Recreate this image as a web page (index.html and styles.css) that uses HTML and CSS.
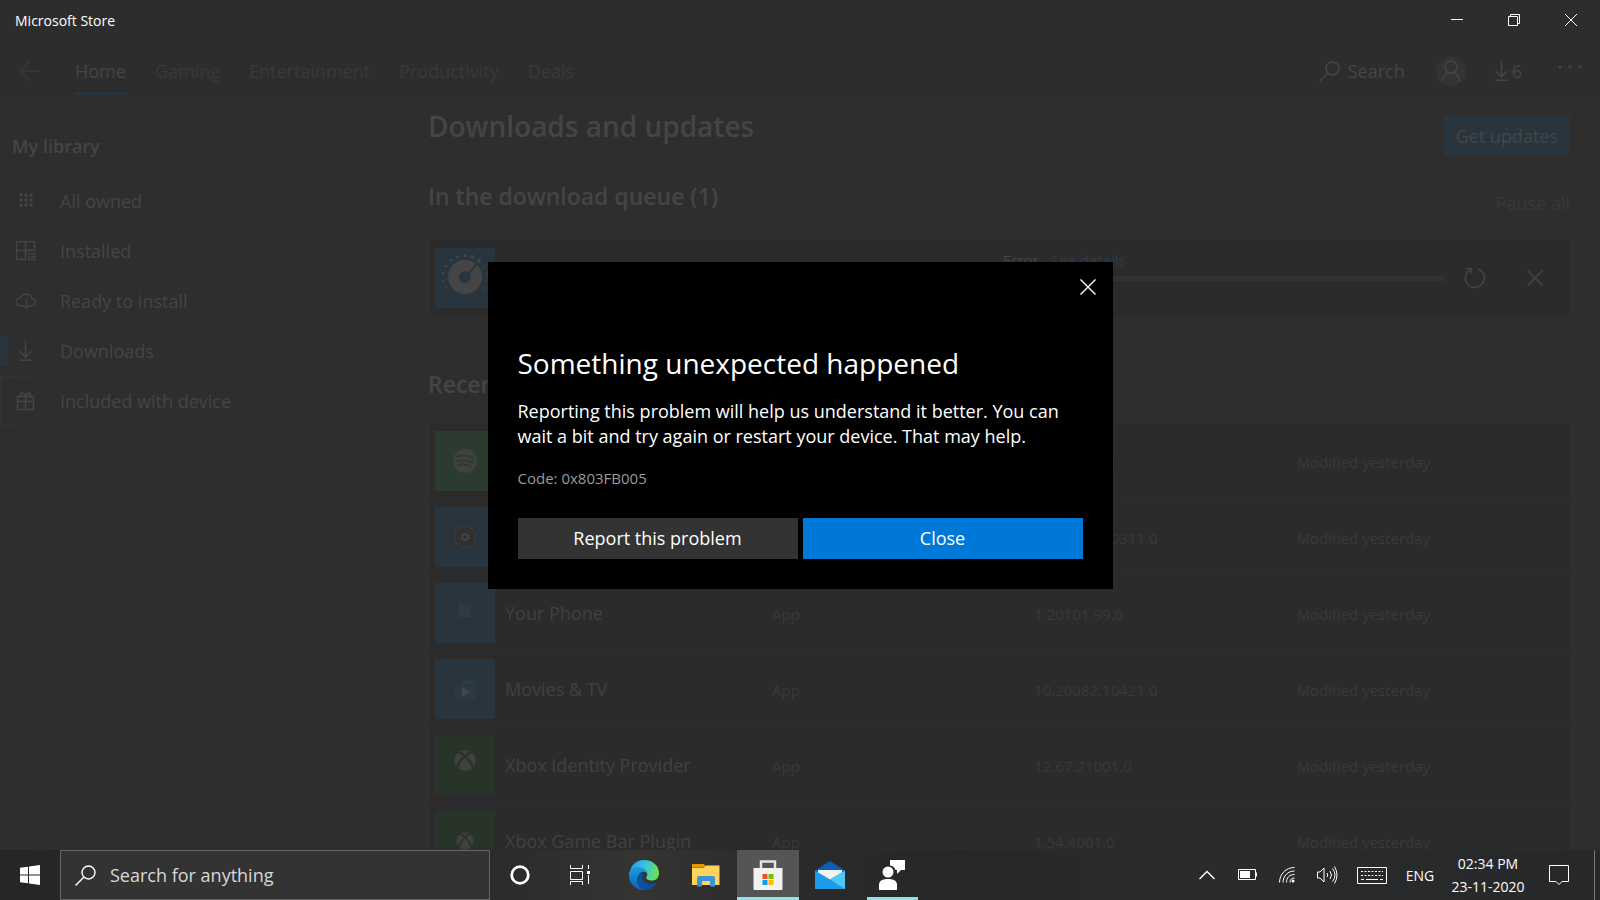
FILE: index.html
```html
<!doctype html>
<html lang="en">
  <head>
    <meta charset="UTF-8" />
    <meta name="viewport" content="width=device-width, initial-scale=1" />
    <title>Microsoft Store</title>
    <link rel="stylesheet" href="styles.css">
  </head>
  <body class="desktop">
    <div class="window">
      <header class="titlebar">
        <span class="titlebar__name">Microsoft Store</span>
        <button class="titlebar__button" aria-label="Minimize">
          <svg width="12" height="12" viewBox="0 0 12 12"><path d="M0 5.5h12" /></svg>
        </button>
        <button class="titlebar__button" aria-label="Restore">
          <svg width="12" height="12" viewBox="0 0 12 12"><path d="M.5 2.5h9v9h-9zM2.500 2.500v-2h9v9h-2" /></svg>
        </button>
        <button class="titlebar__button" aria-label="Close window">
          <svg width="12" height="12" viewBox="0 0 12 12"><path d="M0 0l12 12M12 0L0 12" /></svg>
        </button>
      </header>

      <div class="toolbar">
        <button class="toolbar__back" aria-label="Back">
          <svg width="20" height="20" viewBox="0 0 20 20"><path d="M20 10H1M10 0.500L.5 10l9.500 9.500" /></svg>
        </button>
        <nav class="tabs">
          <a class="tabs__link tabs__link--active" href="#home">Home</a>
          <a class="tabs__link" href="#gaming">Gaming</a>
          <a class="tabs__link" href="#entertainment">Entertainment</a>
          <a class="tabs__link" href="#productivity">Productivity</a>
          <a class="tabs__link" href="#deals">Deals</a>
        </nav>
        <button class="toolbar__search">
          <svg width="21" height="21" viewBox="0 0 21 21"><circle cx="13.500" cy="7.500" r="6.500" /><path d="M9 12L.5 20.500" /></svg>
          Search
        </button>
        <button class="toolbar__avatar" aria-label="Account">
          <svg width="20" height="22" viewBox="0 0 20 22"><circle cx="10" cy="7" r="6" /><path d="M1.500 21c0-5 3.500-8 8.500-8s8.500 3 8.500 8" /></svg>
        </button>
        <button class="toolbar__downloads">
          <svg width="13" height="20" viewBox="0 0 13 20"><path d="M6.500 0v15.500M.7 10l5.800 5.800L12.300 10M.5 19.300h12" /></svg>
          6
        </button>
        <button class="toolbar__more" aria-label="See more">
          <svg width="24" height="4" viewBox="0 0 24 4"><circle class="solid" cx="2" cy="2" r="1.600" /><circle class="solid" cx="12" cy="2" r="1.600" /><circle class="solid" cx="22" cy="2" r="1.600" /></svg>
        </button>
      </div>

      <div class="content">
        <aside class="sidebar">
          <h3 class="sidebar__title">My library</h3>
          <a class="sidebar__item" href="#all">
            <svg width="20" height="20" viewBox="0 0 20 20"><g class="solid"><circle cx="5" cy="4" r="1.700" /><circle cx="10" cy="4" r="1.700" /><circle cx="15" cy="4" r="1.700" /><circle cx="5" cy="9" r="1.700" /><circle cx="10" cy="9" r="1.700" /><circle cx="15" cy="9" r="1.700" /><circle cx="5" cy="14" r="1.700" /><circle cx="10" cy="14" r="1.700" /><circle cx="15" cy="14" r="1.700" /></g></svg>
            All owned
          </a>
          <a class="sidebar__item" href="#installed">
            <svg width="20" height="20" viewBox="0 0 20 20"><path d="M.5.5h18v9H.5zM9.500.5v18h-9v-9M12 13h2M15 13h5M12 16h2M15 16h5M12 18.500h2M15 18.500h5" /></svg>
            Installed
          </a>
          <a class="sidebar__item" href="#ready">
            <svg width="20" height="20" viewBox="0 0 20 20"><path d="M7 15H4.500a4 4 0 0 1-.3-8A6.300 6.300 0 0 1 16 7.500a3.800 3.800 0 0 1-.5 7.500H14M10.500 8.500v9M7.500 14.500l3 3 3-3" /></svg>
            Ready to install
          </a>
          <a class="sidebar__item sidebar__item--active" href="#downloads">
            <svg width="20" height="20" viewBox="0 0 20 20"><path d="M9.500 0v15.500M3.500 10l6 6 6-6M3.500 19.300h12" /></svg>
            Downloads
          </a>
          <a class="sidebar__item sidebar__item--focus" href="#included">
            <svg width="20" height="20" viewBox="0 0 20 20"><path d="M1.500 5.500h16v13h-16zM1.500 10.500h16M9.500 5v13.500M9.500 5.500C5 5.500 4 4.500 4.500 3S8.500 1.500 9.500 5.500c1-4 4.500-4 5-2.500s-.5 2.500-5 2.500" /></svg>
            Included with device
          </a>
        </aside>

        <main class="page">
          <div class="page__head">
            <h1>Downloads and updates</h1>
            <button class="page__update">Get updates</button>
          </div>

          <div class="page__section">
            <h2>In the download queue (1)</h2>
            <button class="page__pause">Pause all</button>
          </div>
          <div class="queue">
            <div class="tile tile--blue">
              <svg width="60" height="60" viewBox="0 0 60 60">
                <circle class="tile__ring" cx="30" cy="29" r="11.500" />
                <path class="tile__notch" d="M33 26l9-10" />
                <g class="solid"><circle cx="11" cy="40" r="1" /><circle cx="8" cy="33" r="1" /><circle cx="8" cy="25" r="1.200" /><circle cx="11" cy="18" r="1.300" /><circle cx="16" cy="12.500" r="1.400" /><circle cx="22.500" cy="9" r="1.500" /><circle cx="30" cy="7.500" r="1.700" /><circle cx="37.500" cy="9" r="1.900" /><circle cx="44" cy="13" r="2.100" /></g>
                <g class="tile__dots"><circle cx="49" cy="19" r="1.500" /><circle cx="51.500" cy="26" r="1.500" /><circle cx="51.500" cy="33" r="1.500" /><circle cx="49" cy="40" r="1.500" /></g>
              </svg>
            </div>
            <div class="queue__status">
              <p>Error <a href="#details">See details</a></p>
              <div class="queue__bar"></div>
            </div>
            <div class="queue__actions">
              <button aria-label="Retry">
                <svg width="22" height="22" viewBox="0 0 22 22"><path d="M14 2a9.500 9.500 0 1 1-7 0.300M1.500 1.500H7.500V7" /></svg>
              </button>
              <button aria-label="Cancel">
                <svg width="16" height="16" viewBox="0 0 16 16"><path d="M.5.5l15 15M15.500.5l-15 15" /></svg>
              </button>
            </div>
          </div>

          <h2 class="page__recent">Recent activity</h2>
          <table class="apps">
            <tbody>
              <tr>
                <td><div class="apps__name"><span class="tile tile--spotify">
                  <svg width="60" height="60" viewBox="0 0 60 60"><circle class="solid" cx="30" cy="30" r="12" /><path class="tile__cut" d="M22 25.500q9-2.500 17 2M22.500 30q8-2 15 1.500M23 34q7-1.500 13 1.500" /></svg>
                </span>Spotify Music</div></td>
                <td>App</td><td>1.147.684.0</td><td>Modified yesterday</td>
              </tr>
              <tr>
                <td><div class="apps__name"><span class="tile tile--blue">
                  <svg width="60" height="60" viewBox="0 0 60 60"><circle cx="30" cy="30" r="10.500" fill="#303030" stroke="#43352f" stroke-width="1.500" /><path d="M33 25l6-6" stroke="#43352f" /><circle cx="30" cy="30" r="3" fill="#2b3035" stroke="#434343" stroke-width="2.500" /></svg>
                </span>Groove Music</div></td>
                <td>App</td><td>10.20102.10311.0</td><td>Modified yesterday</td>
              </tr>
              <tr>
                <td><div class="apps__name"><span class="tile tile--blue">
                  <svg width="60" height="60" viewBox="0 0 60 60"><path d="M24 19h12v22H24z" fill="#29323a" stroke="none" /><path d="M24 19h12v15H24z" fill="#2b3b43" stroke="none" /><path d="M27 20.500h6" stroke="#293139" /></svg>
                </span>Your Phone</div></td>
                <td>App</td><td>1.20101.99.0</td><td>Modified yesterday</td>
              </tr>
              <tr>
                <td><div class="apps__name"><span class="tile tile--blue">
                  <svg width="60" height="60" viewBox="0 0 60 60"><path d="M19 26h22v15H19z" fill="#2a3944" stroke="none" /><path d="M28 22l13-2v4l-13 2z" fill="#2d3d45" stroke="none" /><path d="M27 28v10l8-5z" fill="#464646" stroke="none" /></svg>
                </span>Movies &amp; TV</div></td>
                <td>App</td><td>10.20082.10421.0</td><td>Modified yesterday</td>
              </tr>
              <tr>
                <td><div class="apps__name"><span class="tile tile--xbox">
                  <svg width="60" height="60" viewBox="0 0 60 60"><circle class="solid" cx="30" cy="25.500" r="10.500" /><path class="tile__cross" d="M21.500 35C23 28 26 24 30 21.500c4 2.500 7 6.500 8.500 13.500M22.500 17c3 0 5 1.500 7.500 4.500 2.500-3 4.500-4.500 7.500-4.500" /></svg>
                </span>Xbox Identity Provider</div></td>
                <td>App</td><td>12.67.21001.0</td><td>Modified yesterday</td>
              </tr>
              <tr>
                <td><div class="apps__name"><span class="tile tile--xbox">
                  <svg width="60" height="60" viewBox="0 0 60 60"><circle class="solid" cx="30" cy="30" r="8.500" /><path class="tile__cross tile__cross--small" d="M23 38c1.500-6 4-9 7-11.500 3 2.500 5.500 5.500 7 11.500M24 23c2.500 0 4 1 6 3.500 2-2.500 3.500-3.500 6-3.500" /></svg>
                </span>Xbox Game Bar Plugin</div></td>
                <td>App</td><td>1.54.4001.0</td><td>Modified yesterday</td>
              </tr>
            </tbody>
          </table>
        </main>
      </div>

      <div class="overlay">
        <section class="dialog" role="dialog" aria-labelledby="dialog-title">
          <button class="dialog__dismiss" aria-label="Dismiss">
            <svg width="16" height="16" viewBox="0 0 16 16"><path d="M.5.5l15 15M15.500.5l-15 15" /></svg>
          </button>
          <h2 class="dialog__title" id="dialog-title">Something unexpected happened</h2>
          <p class="dialog__text">Reporting this problem will help us understand it better. You can wait a bit and try again or restart your device. That may help.</p>
          <p class="dialog__code">Code: 0x803FB005</p>
          <div class="dialog__actions">
            <button class="dialog__button">Report this problem</button>
            <button class="dialog__button dialog__button--primary">Close</button>
          </div>
        </section>
      </div>
    </div>

    <footer class="taskbar">
      <button class="taskbar__button" aria-label="Start">
        <svg class="filled" width="20" height="20" viewBox="0 0 20 20"><path d="M0 2.800L8 1.700V9.500H0zM9 1.500L20 0v9.500H9zM0 10.500h8v7.800L0 17.200zM9 10.500h11V20L9 18.500z" /></svg>
      </button>
      <label class="taskbar__search">
        <svg width="21" height="21" viewBox="0 0 21 21"><circle cx="13.500" cy="7.500" r="6.500" /><path d="M9 12L.5 20.500" /></svg>
        <input type="text" placeholder="Search for anything" aria-label="Search for anything" />
      </label>
      <button class="taskbar__button" aria-label="Cortana">
        <svg width="20" height="20" viewBox="0 0 20 20"><circle cx="10" cy="10" r="8.300" stroke-width="2.800" /></svg>
      </button>
      <button class="taskbar__button" aria-label="Task view">
        <svg width="20" height="20" viewBox="0 0 20 20"><path d="M.5 0v3.500h12V0M.5 6.500h12v8H.5zM.5 20v-3.500h12V20M18.500 0v4M18.500 10v9" /><path d="M17 6h3v3h-3z" fill="#fff" stroke="none" /></svg>
      </button>
      <div class="taskbar__apps">
        <button class="taskbar__app" aria-label="Edge">
          <svg class="filled" width="30" height="30" viewBox="0 0 30 30">
            <defs>
              <linearGradient id="edge-top" x1="0" x2="1" y1=".2" y2=".4"><stop offset="0" stop-color="#1c9fe0" /><stop offset=".5" stop-color="#35c1e8" /><stop offset="1" stop-color="#6be054" /></linearGradient>
              <linearGradient id="edge-side" x1="0" x2="0" y1="0" y2="1"><stop offset="0" stop-color="#1b9de2" /><stop offset="1" stop-color="#0b62b8" /></linearGradient>
            </defs>
            <path d="M1 11C3 4 8 0 15 0c9 0 15 6 15 13 0 5-3 7.500-7 7.500-4 0-6.500-1.500-5.500-3.500 2.500-4-1-7.500-5.500-7.500C7 9.500 3 11 0 15z" fill="url(#edge-top)" />
            <path d="M0 15c0-5 4-8 9-8 5 0 9 3 9.500 7-2-3-7-3-8.500 1-2 5 1 12 8 14.500C8 32 0 24 0 15z" fill="url(#edge-side)" />
            <path d="M11 14c-3 3-4 6-2.500 9.500 2 5 7 7 11 6 4-1 7-4 8.500-7-6 3-14 1-14.500-5-.1-2 .5-3 1.500-4-1.500-1-3-.5-4 .5z" fill="#0d4f9c" />
          </svg>
        </button>
        <button class="taskbar__app" aria-label="File Explorer">
          <svg class="filled" width="28" height="24" viewBox="0 0 28 24"><path d="M0 1h12l2 3H0z" fill="#e09b00" /><path d="M0 4.500h12l2-2h13.500V22H0z" fill="#ffd35c" /><path d="M5 23.500V15a2 2 0 0 1 2-2h14a2 2 0 0 1 2 2v8.500h-5V18h-8v5.500z" fill="#3a95d8" /></svg>
        </button>
        <button class="taskbar__app taskbar__app--active" aria-label="Microsoft Store">
          <svg class="filled" width="30" height="30" viewBox="0 0 30 30"><path d="M8 10V1.500h14V10" fill="none" stroke="#e6e6e6" stroke-width="2.500" /><path d="M.5 8h29v21a1 1 0 0 1-1 1h-27a1 1 0 0 1-1-1z" fill="#f2f2f2" /><path d="M9.500 14h5v5h-5z" fill="#f25022" /><path d="M15.500 14h5v5h-5z" fill="#7fba00" /><path d="M9.500 20h5v5h-5z" fill="#00a4ef" /><path d="M15.500 20h5v5h-5z" fill="#ffb900" /></svg>
        </button>
        <button class="taskbar__app" aria-label="Mail">
          <svg class="filled" width="30" height="28" viewBox="0 0 30 28"><path d="M0 9.500L15 0l15 9.500v4H0z" fill="#0a5fb4" /><path d="M3 9h24v10H3z" fill="#f3f3f3" /><path d="M0 9.500l15 9L30 9.500V28H0z" fill="#1e9be8" /><path d="M15 18.500L30 9.500V28z" fill="#4cc8f5" /></svg>
        </button>
        <button class="taskbar__app taskbar__app--open" aria-label="Get Help">
          <svg class="filled" width="26" height="30" viewBox="0 0 26 30"><circle cx="9" cy="12" r="5.500" /><path d="M0 30v-5c0-4 3-6 9-6s9 2 9 6v5zM11 0h15v10h-4l-4 4V10h-1.500q-1-4-5.500-4.500z" /></svg>
        </button>
      </div>
      <div class="tray">
        <button class="tray__button" aria-label="Show hidden icons">
          <svg width="16" height="10" viewBox="0 0 16 10"><path d="M.5 9L8 1.500 15.500 9" stroke-width="1.400" /></svg>
        </button>
        <button class="tray__button" aria-label="Battery">
          <svg width="19" height="12" viewBox="0 0 19 12"><path d="M.5.5h17v10H.5zM18.500 3.500v4" /><path d="M2 2h10v7H2z" fill="#fff" stroke="none" /></svg>
        </button>
        <button class="tray__button" aria-label="Network">
          <svg width="16" height="16" viewBox="0 0 16 16"><path d="M.5 15.500C.5 7 7 .5 15.500.5M4 15.500C4 9 9 4 15.500 4M7.500 15.500c0-5 3-8 8-8M11 15.500q0-4.500 4.500-4.500" /><circle cx="14" cy="14" r="1.500" fill="#fff" stroke="none" /></svg>
        </button>
        <button class="tray__button" aria-label="Volume">
          <svg width="21" height="18" viewBox="0 0 21 18"><path d="M.5 6v6h2.500l4 4V2L3 6zM10 7q1.500 2 0 4M13 5q3 4 0 8M15.500 2.500q5 6.500 0 13M17.500.5q5 8.500 0 17" /></svg>
        </button>
        <button class="tray__button tray__button--keyboard" aria-label="Touch keyboard">
          <svg width="30" height="17" viewBox="0 0 30 17"><path d="M.5.5h29v16H.5z" /><path d="M4 4.500h22M4 8.500h22" stroke-dasharray="2 1.500" /><path d="M4 12.500h3M9 12.500h12M23 12.500h3" /></svg>
        </button>
        <button class="tray__button tray__button--language">ENG</button>
        <button class="tray__button tray__button--clock"><span>02:34 PM</span><span>23-11-2020</span></button>
        <button class="tray__button tray__button--notifications" aria-label="Notifications">
          <svg width="20" height="20" viewBox="0 0 20 20"><path d="M.5.5h19v16H13L10 19.500 7 16.500H.5z" /></svg>
        </button>
        <button class="tray__desktop" aria-label="Show desktop"></button>
      </div>
    </footer>
  </body>
</html>
```
FILE: styles.css
```css
:root {
  --bg: #2e2e2e;
  --panel: #2b2b2b;
  --dim: #454545;
  --faint: #393939;
  --blue: #28353f;
  --accent: #0078d7;
}

* {
  box-sizing: border-box;
}

body,
h1,
h2,
h3,
p {
  margin: 0;
}

h1,
h2,
h3 {
  font-weight: 600;
}

button,
input {
  padding: 0;
  border: 0;
  background: none;
  color: inherit;
  font: inherit;
}

a {
  color: inherit;
  text-decoration: none;
}

svg {
  flex: none;
  fill: none;
  stroke: currentColor;
}

.solid,
.filled {
  fill: currentColor;
  stroke: none;
}

.desktop {
  display: grid;
  grid-template-rows: minmax(0, 1fr) 50px;
  height: 100vh;
  overflow: hidden;
  background: var(--bg);
  color: #fff;
  font-family: "Open Sans", "Noto Sans", sans-serif;
  font-size: 18px;
}

.window {
  position: relative;
  display: flex;
  flex-direction: column;
  overflow: hidden;
  color: var(--dim);
}

/* Title bar */

.titlebar {
  display: flex;
  align-items: center;
  flex: none;
  height: 40px;
  padding: 0 1px 0 15px;
  background: #2d2d2d;
  color: #fff;
  font-size: 14px;
}

.titlebar__name {
  flex: 1;
}

.titlebar__button {
  display: grid;
  place-items: center;
  width: 57px;
  height: 40px;
}

/* Toolbar */

.toolbar {
  display: flex;
  align-items: center;
  flex: none;
  height: 60px;
  padding-top: 2px;
  background: #2d2d2d;
}

.toolbar svg,
.sidebar svg,
.queue__actions svg {
  stroke-width: 1.5;
}

.toolbar__back {
  display: grid;
  place-items: center;
  width: 60px;
  margin-right: 15px;
  color: var(--faint);
}

.tabs {
  display: flex;
  flex: 1;
  gap: 29px;
  color: var(--faint);
}

.tabs__link {
  padding: 7px 0 5px;
  border-bottom: 3px solid transparent;
  line-height: 32px;
}

.tabs__link--active {
  border-color: var(--blue);
  color: var(--dim);
}

.toolbar__search {
  display: flex;
  align-items: center;
  gap: 8px;
  margin-right: 31px;
}

.toolbar__avatar {
  display: grid;
  place-items: center;
  width: 30px;
  height: 30px;
  margin-right: 29px;
  border-radius: 50%;
  background: #333;
}

.toolbar__downloads {
  display: flex;
  align-items: center;
  gap: 4px;
  margin-right: 36px;
}

.toolbar__more {
  margin-right: 18px;
  padding-bottom: 18px;
}

/* Sidebar */

.content {
  display: grid;
  grid-template-columns: 428px minmax(0, 1fr);
}

.sidebar {
  padding-top: 31px;
}

.sidebar__title {
  margin-bottom: 15px;
  padding-left: 12px;
  font-size: 18px;
  line-height: 30px;
}

.sidebar__item {
  display: flex;
  align-items: center;
  gap: 24px;
  height: 50px;
  padding-left: 16px;
}

.sidebar__item--active {
  background: linear-gradient(var(--blue), var(--blue)) 0 50% / 8px 30px no-repeat;
}

.sidebar__item--focus {
  border: 1px solid;
  border-image: linear-gradient(90deg, #343434, transparent 25%) 1;
  padding-left: 15px;
}

/* Downloads page */

.page {
  padding: 6px 30px 0 0;
}

.page__head {
  display: flex;
  align-items: flex-start;
  justify-content: space-between;
}

.page h1 {
  font-size: 28px;
  line-height: 40px;
}

.page h2 {
  font-size: 23px;
  line-height: 30px;
}

.page__update {
  height: 41px;
  margin-top: 9px;
  padding: 0 12px;
  background: var(--blue);
}

.page__section {
  display: flex;
  align-items: flex-start;
  justify-content: space-between;
  margin: 25px 0 22px;
}

.page__pause {
  padding-top: 7px;
  color: var(--faint);
  line-height: 30px;
}

.page .page__recent {
  margin: 53px 0 24px;
}

.queue {
  display: grid;
  grid-template-columns: 50% minmax(0, 1fr) auto;
  margin-left: 2px;
  padding: 8px 5px;
  background: var(--panel);
}

.queue__status {
  padding: 2px 0 0 3px;
  font-size: 15px;
  line-height: 20px;
}

.queue__status a {
  margin-left: 8px;
  color: #2a3c4a;
}

.queue__bar {
  height: 5px;
  margin-top: 6px;
  background: #323232;
}

.queue__actions {
  display: flex;
}

.queue__actions button {
  display: grid;
  place-items: center;
  width: 60px;
}

.tile {
  flex: none;
  width: 60px;
  height: 60px;
}

.tile svg {
  display: block;
}

.tile--blue {
  --tile: #28353f;
  background: var(--tile);
}

.tile--spotify {
  --tile: #2b3b30;
  background: var(--tile);
}

.tile--xbox {
  --tile: #293429;
  background: var(--tile);
}

.tile__ring {
  stroke-width: 11;
}

.tile__notch {
  stroke: var(--tile);
  stroke-width: 2;
}

.tile__cut {
  stroke: var(--tile);
  stroke-width: 2;
  stroke-linecap: round;
}

.tile__cross {
  stroke: var(--tile);
  stroke-width: 2.5;
}

.tile__cross--small {
  stroke-width: 2;
}

.tile__dots {
  stroke: #33414b;
}

.apps {
  width: calc(100% - 2px);
  margin-left: 2px;
  border-collapse: collapse;
  table-layout: fixed;
  background: var(--panel);
}

.apps td {
  width: 23%;
  height: 76px;
  padding: 2px 0 0;
  border-bottom: 1px solid #2e2e2e;
  color: var(--faint);
  font-size: 15px;
}

.apps td:first-child {
  width: 30%;
  padding: 0 0 0 5px;
}

.apps td:last-child {
  width: 24%;
}

.apps__name {
  display: flex;
  align-items: center;
  gap: 10px;
  color: #414141;
  font-size: 18px;
}

/* Error dialog */

.overlay {
  position: absolute;
  inset: 0;
  display: grid;
  place-items: center;
}

.dialog {
  position: relative;
  width: 625px;
  padding: 80px 30px 30px;
  background: #000;
  color: #fff;
}

.dialog__dismiss {
  position: absolute;
  top: 0;
  right: 0;
  display: grid;
  place-items: center;
  width: 50px;
  height: 50px;
}

.dialog__dismiss svg {
  stroke-width: 1.4;
}

.dialog__title {
  margin-bottom: 15px;
  font-size: 28px;
  font-weight: 400;
  line-height: 42px;
}

.dialog__text {
  margin-bottom: 18px;
  line-height: 25px;
}

.dialog__code {
  margin-bottom: 29px;
  color: #999;
  font-size: 15px;
  line-height: 22px;
}

.dialog__actions {
  display: grid;
  grid-template-columns: 1fr 1fr;
  gap: 5px;
}

.dialog__button {
  height: 41px;
  background: #333;
}

.dialog__button--primary {
  background: var(--accent);
}

/* Taskbar */

.taskbar {
  display: flex;
  background: linear-gradient(90deg, #242628, #2a2a2a 30%, #363432 40%, #2b2b2a 48%, #262728 60%, #2a2b2b 75%, #26282a);
}

.taskbar__button {
  display: grid;
  place-items: center;
  flex: none;
  width: 60px;
}

.taskbar__search {
  display: flex;
  align-items: center;
  flex: 0 1 430px;
  gap: 14px;
  padding: 0 14px;
  border: 1px solid #666;
  background: #333;
}

.taskbar__search svg {
  stroke-width: 1.4;
}

.taskbar__search input {
  flex: 1;
  min-width: 0;
}

.taskbar__search input::placeholder {
  color: #d8d8d8;
}

.taskbar__apps {
  display: flex;
  margin-left: 3px;
}

.taskbar__app {
  display: grid;
  place-items: center;
  width: 62px;
}

.taskbar__app--active {
  background: #555;
  box-shadow: inset 0 -3px #8fe1ee;
}

.taskbar__app--open {
  background: linear-gradient(#8fe1ee, #8fe1ee) 50% 100% / 51px 3px no-repeat;
}

.tray {
  display: flex;
  margin-left: auto;
  font-size: 14px;
}

.tray__button {
  display: grid;
  place-items: center;
  width: 40px;
}

.tray__button--keyboard {
  width: 50px;
}

.tray__button--language {
  width: 46px;
}

.tray__button--clock {
  align-content: center;
  width: 90px;
  line-height: 23px;
}

.tray__button--notifications {
  width: 52px;
}

.tray__desktop {
  width: 6px;
  margin-left: 9px;
  border-left: 1px solid #777;
}
```
